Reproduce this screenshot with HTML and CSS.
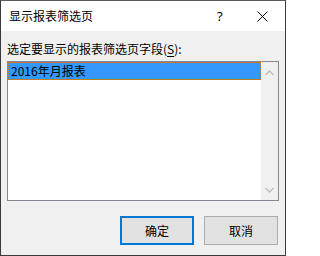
FILE: index.html
```html
<!DOCTYPE html>
<html>
<head>
<meta charset="utf-8">
<link rel="stylesheet" href="styles.css">
</head>
<body>
<div class="window">
  <div class="titlebar">
    <span class="title">显示报表筛选页</span>
    <span class="help">?</span>
    <span class="close"><svg width="11" height="11" viewBox="0 0 11 11"><path d="M0.5 0.5 L10.5 10.5 M10.5 0.5 L0.5 10.5" stroke="#000" stroke-width="1" fill="none"/></svg></span>
  </div>
  <div class="content">
    <div class="label">选定要显示的报表筛选页字段(<u>S</u>):</div>
    <div class="listbox">
      <div class="items">
        <div class="item selected">2016年月报表</div>
      </div>
      <div class="scrollbar">
        <svg class="arrow" width="9" height="6" viewBox="0 0 9 6"><path d="M0.5 5 L4.5 1 L8.5 5" stroke="#bdbdbd" stroke-width="1.4" fill="none"/></svg>
        <svg class="arrow" width="9" height="6" viewBox="0 0 9 6"><path d="M0.5 1 L4.5 5 L8.5 1" stroke="#bdbdbd" stroke-width="1.4" fill="none"/></svg>
      </div>
    </div>
    <div class="buttons">
      <div class="btn default">确定</div>
      <div class="btn">取消</div>
    </div>
  </div>
</div>
</body>
</html>
```
FILE: styles.css
```css
html, body {
  margin: 0;
  padding: 0;
}
body {
  width: 286px;
  height: 256px;
  font-family: "Noto Sans CJK SC", "Microsoft YaHei", sans-serif;
  font-size: 12px;
  color: #000;
}
.window {
  box-sizing: border-box;
  width: 286px;
  height: 256px;
  border: 1px solid #3a3a3a;
  border-top-color: #5a5a5a;
  background: #f0f0f0;
  display: flex;
  flex-direction: column;
}
.titlebar {
  height: 30px;
  background: #fff;
  display: flex;
  align-items: center;
}
.title {
  margin-left: 8px;
  font-size: 12px;
  line-height: 16px;
  flex: 1;
}
.help {
  font-family: "Noto Sans", sans-serif;
  font-size: 13px;
  line-height: 16px;
  width: 40px;
  text-align: left;
}
.close {
  width: 28px;
  display: flex;
  align-items: center;
  padding-top: 1px;
}
.content {
  flex: 1;
  padding: 10px 0 0 6px;
  display: flex;
  flex-direction: column;
}
.label {
  line-height: 16px;
  height: 16px;
}
.label u {
  text-decoration-thickness: 1px;
  text-underline-offset: 2px;
}
.listbox {
  margin-top: 4px;
  box-sizing: border-box;
  width: 272px;
  height: 140px;
  border: 1px solid #828790;
  background: #fff;
  display: flex;
}
.items {
  flex: 1;
}
.item {
  box-sizing: border-box;
  height: 18px;
  line-height: 16px;
  padding-left: 2px;
}
.item.selected {
  background: #3399ff;
  border: 1px dotted #d07820;
  color: #000;
}
.scrollbar {
  width: 17px;
  background: #f0f0f0;
  display: flex;
  flex-direction: column;
  justify-content: space-between;
  align-items: center;
  padding: 8px 0 7px;
}
.arrow {
  display: block;
}
.buttons {
  display: flex;
  justify-content: flex-end;
  gap: 10px;
  margin-top: 15px;
  padding-right: 7px;
}
.btn {
  box-sizing: border-box;
  width: 74px;
  height: 29px;
  background: #e1e1e1;
  border: 1px solid #adadad;
  display: flex;
  align-items: center;
  justify-content: center;
  line-height: 16px;
}
.btn.default {
  border: 2px solid #0078d7;
}
```
